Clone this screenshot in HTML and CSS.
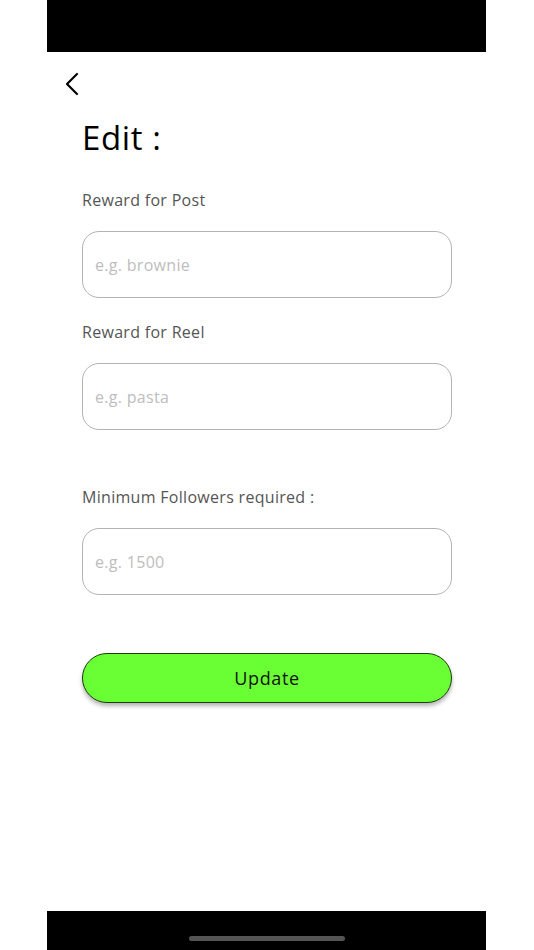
FILE: index.html
```html
<!DOCTYPE html>
<html lang="en">
<head>
<meta charset="utf-8">
<meta name="viewport" content="width=device-width, initial-scale=1">
<title>Edit</title>
<link rel="stylesheet" href="styles.css">
</head>
<body>
<div class="phone">
  <div class="status-bar"></div>
  <main class="screen">
    <nav class="nav">
      <button class="back" aria-label="Back">
        <svg width="16" height="24" viewBox="0 0 16 24" fill="none" stroke="#000" stroke-width="2.2" stroke-linecap="round" stroke-linejoin="round"><path d="M12 2 L2 12 L12 22"/></svg>
      </button>
    </nav>
    <h1 class="title">Edit :</h1>
    <form class="form">
      <div class="field field-post">
        <label class="label" for="post">Reward for Post</label>
        <input class="input" id="post" type="text" placeholder="e.g. brownie">
      </div>
      <div class="field field-reel">
        <label class="label" for="reel">Reward for Reel</label>
        <input class="input" id="reel" type="text" placeholder="e.g. pasta">
      </div>
      <div class="field field-followers">
        <label class="label" for="followers">Minimum Followers required :</label>
        <input class="input" id="followers" type="text" placeholder="e.g. 1500">
      </div>
      <button class="update" type="button">Update</button>
    </form>
  </main>
  <div class="home-bar"><span class="home-indicator"></span></div>
</div>
</body>
</html>
```
FILE: styles.css
```css
* { box-sizing: border-box; }
html, body { margin: 0; padding: 0; background: #fff; }
body {
  font-family: "Open Sans", "Noto Sans", sans-serif;
  color: #000;
}
.phone {
  width: 439px;
  height: 950px;
  margin: 0 0 0 47px;
  display: flex;
  flex-direction: column;
  background: #fff;
}
.status-bar {
  height: 52px;
  background: #000;
  flex: none;
}
.screen {
  flex: 1;
  padding: 0 34px 0 35px;
  display: flex;
  flex-direction: column;
}
.nav {
  height: 64px;
  display: flex;
  align-items: center;
}
.back {
  margin-left: -17px;
  background: none;
  border: 0;
  padding: 0;
  width: 16px;
  height: 24px;
  display: flex;
  cursor: pointer;
}
.title {
  margin: 0;
  font-size: 33px;
  line-height: 44px;
  font-weight: 500;
  letter-spacing: 0.6px;
}
.form {
  display: flex;
  flex-direction: column;
  margin-top: 30px;
}
.field {
  display: flex;
  flex-direction: column;
  gap: 21px;
}
.field-reel { margin-top: 24px; }
.field-followers { margin-top: 57px; }
.label {
  font-size: 16px;
  line-height: 20px;
  letter-spacing: 0.3px;
  color: #555;
}
.input {
  height: 67px;
  width: 100%;
  border: 1.5px solid #b3b3b3;
  border-radius: 17px;
  padding: 0 12px;
  font-family: inherit;
  font-size: 16px;
  letter-spacing: 0.3px;
  color: #333;
  background: #fff;
  outline: none;
}
.input::placeholder { color: #bdbdbd; }
.update {
  margin-top: 58px;
  height: 50px;
  border-radius: 25px;
  background: #6aff35;
  border: 1.5px solid #1e3a12;
  box-shadow: 0 3px 4px rgba(0,0,0,0.3);
  font-family: inherit;
  font-size: 18px;
  font-weight: 500;
  letter-spacing: 0.6px;
  color: #111;
  cursor: pointer;
}
.home-bar {
  height: 39px;
  background: #000;
  flex: none;
  display: flex;
  justify-content: center;
  padding-top: 25px;
}
.home-indicator {
  width: 156px;
  height: 5px;
  border-radius: 3px;
  background: #555;
}
```
